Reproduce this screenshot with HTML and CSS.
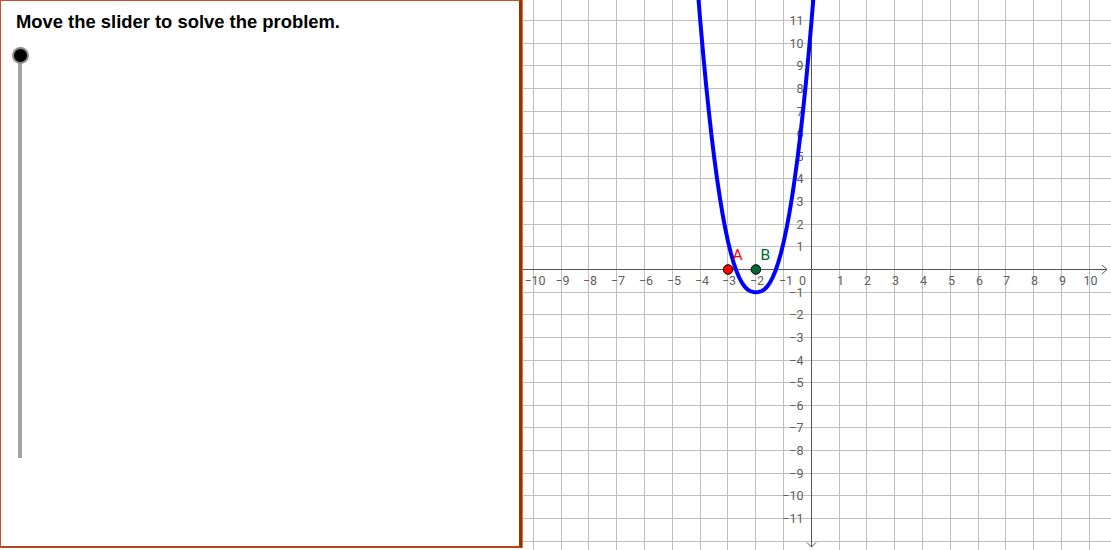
FILE: index.html
```html
<!DOCTYPE html>
<html>
<head>
<meta charset="utf-8">
<link rel="stylesheet" href="styles.css">
</head>
<body>
<div class="app">
  <section class="panel">
    <h1 class="title">Move the slider to solve the problem.</h1>
    <div class="slider"><div class="knob"></div></div>
  </section>
  <svg class="graph" width="589" height="550" viewBox="522 0 589 550">
    <rect x="522" y="0" width="589" height="550" fill="#fff"/>
    <path class="grid" d="M533.5 0V550M561.5 0V550M588.5 0V550M616.5 0V550M644.5 0V550M672.5 0V550M700.5 0V550M727.5 0V550M755.5 0V550M783.5 0V550M839.5 0V550M866.5 0V550M894.5 0V550M922.5 0V550M950.5 0V550M978.5 0V550M1005.5 0V550M1033.5 0V550M1061.5 0V550M1089.5 0V550
    M522 20.5H1111M522 43.5H1111M522 65.5H1111M522 88.5H1111M522 111.5H1111M522 133.5H1111M522 156.5H1111M522 178.5H1111M522 201.5H1111M522 224.5H1111M522 246.5H1111M522 292.5H1111M522 314.5H1111M522 337.5H1111M522 360.5H1111M522 382.5H1111M522 405.5H1111M522 427.5H1111M522 450.5H1111M522 473.5H1111M522 495.5H1111M522 518.5H1111M522 541.5H1111"/>
    <path class="axis" d="M522 269.5H1107M1102 265L1107 269.5L1102 274M811.5 0V547M807 542.5L811.5 547L816 542.5"/>
    <g class="xlabels">
      <text x="535">−10</text><text x="562.5">−9</text><text x="590">−8</text><text x="618">−7</text><text x="646">−6</text><text x="674">−5</text><text x="702">−4</text><text x="729">−3</text><text x="757">−2</text><text x="786">−1</text><text x="802.5">0</text>
      <text x="840.5">1</text><text x="867.5">2</text><text x="895.5">3</text><text x="923.5">4</text><text x="951.5">5</text><text x="979.5">6</text><text x="1006.5">7</text><text x="1034.5">8</text><text x="1062.5">9</text><text x="1090.5">10</text>
    </g>
    <g class="ylabels">
      <text y="25">11</text><text y="48">10</text><text y="70">9</text><text y="93">8</text><text y="116">7</text><text y="138">6</text><text y="161">5</text><text y="183">4</text><text y="206">3</text><text y="229">2</text><text y="251">1</text>
      <text y="297">−1</text><text y="319">−2</text><text y="342">−3</text><text y="365">−4</text><text y="387">−5</text><text y="410">−6</text><text y="432">−7</text><text y="455">−8</text><text y="478">−9</text><text y="500">−10</text><text y="523">−11</text>
    </g>
    <polyline class="curve" points="697.52,-12.82 700.3,21.31 703.08,53.01 705.86,82.47 708.64,109.67 711.42,134.66 714.2,157.52 716.98,178.3 719.76,197.05 722.54,213.87 725.32,228.78 728.1,241.88 730.88,253.23 733.66,262.91 736.44,271.02 739.22,277.61 742,282.81 744.78,286.72 747.56,289.45 750.34,291.13 753.12,291.95 755.9,292.14 758.68,291.95 761.46,291.13 764.24,289.45 767.02,286.72 769.8,282.81 772.58,277.61 775.36,271.02 778.14,262.91 780.92,253.23 783.7,241.88 786.48,228.78 789.26,213.87 792.04,197.05 794.82,178.3 797.6,157.52 800.38,134.66 803.16,109.67 805.94,82.47 808.72,53.01 811.5,21.31 814.28,-12.82"/>
    <circle class="pt pt-a" cx="728.1" cy="269.5" r="4.8"/>
    <circle class="pt pt-b" cx="755.9" cy="269.5" r="4.8"/>
    <text class="plabel plabel-a" x="732.5" y="260">A</text>
    <text class="plabel plabel-b" x="760.5" y="259.5">B</text>
  </svg>
</div>
</body>
</html>
```
FILE: styles.css
```css
html, body {
  margin: 0;
  padding: 0;
  background: #fff;
}
.app {
  display: flex;
  width: 1111px;
  height: 550px;
  overflow: hidden;
}
.panel {
  box-sizing: border-box;
  width: 522px;
  height: 548px;
  flex: none;
  background: #fff;
  border-top: 1px solid #c0542a;
  border-left: 1px solid #c0542a;
  border-bottom: 2px solid #b8481c;
  border-right: 3px solid #953100;
  box-shadow: 1px 0 0 #dc7448;
  padding: 10px 0 0 15px;
  position: relative;
  z-index: 1;
}
.title {
  margin: 0;
  font-family: "Liberation Sans", Arial, sans-serif;
  font-weight: bold;
  font-size: 18.4px;
  line-height: 21px;
  color: #000;
  white-space: nowrap;
}
.slider {
  position: relative;
  margin: 23px 0 0 2px;
  width: 4px;
  height: 403px;
  background: #a3a3a3;
}
.knob {
  position: absolute;
  left: -6.5px;
  top: -8px;
  width: 13px;
  height: 13px;
  border-radius: 50%;
  background: #000;
  border: 2px solid #8c8c8c;
}
.graph {
  display: block;
  flex: none;
}
.grid {
  stroke: #bfbfbf;
  stroke-width: 1;
  fill: none;
}
.axis {
  stroke: #555;
  stroke-width: 1;
  fill: none;
}
.xlabels text, .ylabels text {
  font-family: Roboto, "Liberation Sans", sans-serif;
  font-size: 12.5px;
  fill: #606060;
}
.xlabels text {
  text-anchor: middle;
  transform: translateY(285px);
}
.ylabels text {
  text-anchor: end;
  transform: translateX(803.5px);
}
.curve {
  fill: none;
  stroke: #0000ff;
  stroke-width: 4;
  stroke-linejoin: round;
}
.pt {
  stroke: #000;
  stroke-width: 1;
}
.pt-a { fill: #ff0000; }
.pt-b { fill: #006633; }
.plabel {
  font-family: Roboto, "Liberation Sans", sans-serif;
  font-size: 15.5px;
}
.plabel-a { fill: #ff0000; }
.plabel-b { fill: #006633; }
```
